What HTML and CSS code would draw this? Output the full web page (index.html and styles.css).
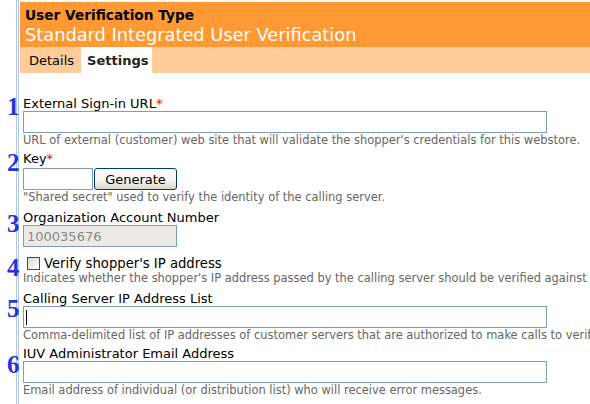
FILE: index.html
```html
<!DOCTYPE html>
<html>
<head>
<meta charset="utf-8">
<link rel="stylesheet" href="styles.css">
</head>
<body>
<div class="frame">
  <header class="head">
    <div class="head-type">User Verification Type</div>
    <div class="head-name">Standard Integrated User Verification</div>
  </header>
  <nav class="tabs">
    <span class="tab">Details</span>
    <span class="tab tab-active">Settings</span>
  </nav>
  <form class="form">
    <div class="field f1">
      <span class="num n1">1</span>
      <div class="label">External Sign-in URL<span class="req">*</span></div>
      <input class="text-input wide" type="text">
      <div class="help">URL of external (customer) web site that will validate the shopper's credentials for this webstore.</div>
    </div>
    <div class="field f2">
      <span class="num n2">2</span>
      <div class="label">Key<span class="req">*</span></div>
      <div class="key-row">
        <input class="text-input key" type="text">
        <button class="btn" type="button">Generate</button>
      </div>
      <div class="help">"Shared secret" used to verify the identity of the calling server.</div>
    </div>
    <div class="field f3">
      <span class="num n3">3</span>
      <div class="label">Organization Account Number</div>
      <input class="text-input account" type="text" value="100035676" disabled>
    </div>
    <div class="field f4">
      <span class="num n4">4</span>
      <label class="check-row"><input class="check" type="checkbox"><span>Verify shopper's IP address</span></label>
      <div class="help">Indicates whether the shopper's IP address passed by the calling server should be verified against the calling server IP address list.</div>
    </div>
    <div class="field f5">
      <span class="num n5">5</span>
      <div class="label">Calling Server IP Address List</div>
      <div class="caret-wrap"><input class="text-input wide" type="text"></div>
      <div class="help">Comma-delimited list of IP addresses of customer servers that are authorized to make calls to verify shopper identity.</div>
    </div>
    <div class="field f6">
      <span class="num n6">6</span>
      <div class="label">IUV Administrator Email Address</div>
      <input class="text-input wide" type="text">
      <div class="help">Email address of individual (or distribution list) who will receive error messages.</div>
    </div>
  </form>
</div>
</body>
</html>
```
FILE: styles.css
```css
html, body {
  margin: 0;
  padding: 0;
  overflow: hidden;
  background: #ffffff;
}
body {
  font-family: "DejaVu Sans", Verdana, sans-serif;
  color: #000;
  width: 590px;
  height: 404px;
}
.frame {
  margin-left: 16px;
  border-left: 3px double #b3c5e6;
  padding-left: 1px;
  padding-top: 2px;
  height: 402px;
}
.head {
  background: #ff9933;
  padding: 5px 0 2px 5px;
}
.head-type {
  font-weight: bold;
  font-size: 13.7px;
  line-height: 16px;
  color: #000;
}
.head-name {
  margin-top: 2px;
  font-size: 17.8px;
  line-height: 20px;
  color: #fff;
}
.tabs {
  display: flex;
  height: 26px;
  background: #ffcc99;
}
.tab {
  font-size: 13px;
  line-height: 15px;
  padding: 6px 7px 0 9px;
}
.tab-active {
  background: #fff;
  font-weight: bold;
  padding: 6px 4px 0 6px;
  color: #222;
}
.form {
  padding: 23px 0 0 3px;
}
.field {
  position: relative;
  margin-bottom: 5px;
}
.f1 { margin-bottom: 4px; }
.f2 { margin-bottom: 6px; }
.f3 { margin-bottom: 9px; }
.f4 { margin-bottom: 6px; }
.f5 { margin-bottom: 4px; }
.num {
  position: absolute;
  left: -16px;
  font-family: "Liberation Serif", "Times New Roman", serif;
  font-weight: bold;
  font-size: 25px;
  line-height: 25px;
  color: #2233e0;
}
.n1 { top: -2px; }
.n2 { top: -1px; }
.n3 { top: 1px; }
.n4 { top: -1px; }
.n5 { top: 5px; }
.n6 { top: 6px; }
.label {
  font-size: 13px;
  line-height: 15px;
}
.req {
  color: #ff0000;
}
.text-input {
  display: block;
  box-sizing: border-box;
  height: 22px;
  margin: 0;
  padding: 0 3px;
  border: 1px solid #7f9db9;
  background: #fff;
  font-family: "DejaVu Sans", Verdana, sans-serif;
  font-size: 13px;
  outline: none;
}
.wide { width: 524px; }
.key { width: 70px; }
.account {
  width: 154px;
  background: #ebeae3;
  color: #8a8a8a;
  -webkit-text-fill-color: #8a8a8a;
  opacity: 1;
}
.key-row {
  display: flex;
  gap: 1px;
  margin-top: 2px;
}
.btn {
  box-sizing: border-box;
  width: 83px;
  height: 22px;
  margin: 0;
  padding: 0;
  border: 1px solid #003c74;
  border-radius: 3px;
  background: linear-gradient(#ffffff, #f4f3ee 60%, #d8d5c8);
  font-family: "DejaVu Sans", Verdana, sans-serif;
  font-size: 13px;
  color: #000;
}
.help {
  font-size: 11.45px;
  line-height: 14px;
  color: #666;
  white-space: nowrap;
}
.check-row {
  display: flex;
  align-items: center;
  font-size: 13.2px;
  line-height: 15px;
  height: 15px;
}
.check {
  appearance: none;
  -webkit-appearance: none;
  box-sizing: border-box;
  width: 13px;
  height: 13px;
  margin: 0 4px 0 4px;
  border: 1px solid #1c5180;
  background: linear-gradient(135deg, #dcdcd5, #f7f7f4 80%, #ffffff);
}
.caret-wrap {
  position: relative;
  width: 524px;
}
.caret-wrap::after {
  content: "";
  position: absolute;
  left: 3px;
  top: 4px;
  width: 1px;
  height: 15px;
  background: #000;
}
```
